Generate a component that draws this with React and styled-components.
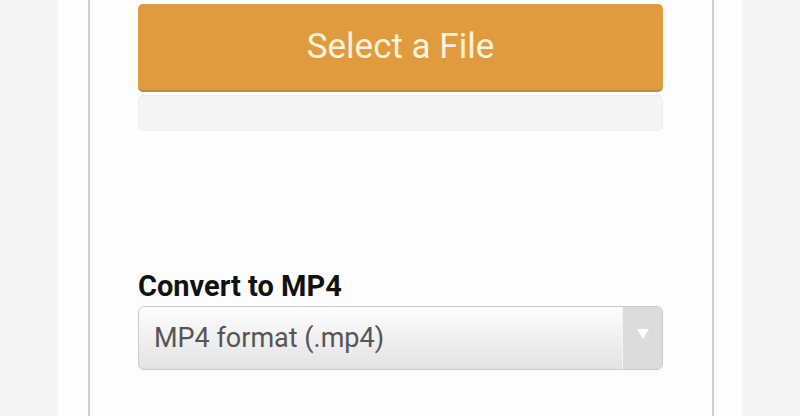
import React from 'react'
import styled, { createGlobalStyle } from 'styled-components'

const GlobalStyle = createGlobalStyle`
  html, body {
    margin: 0;
    padding: 0;
    background: #f5f5f5;
    font-family: Roboto, "Liberation Sans", sans-serif;
  }
`

const Page = styled.div`
  display: flex;
  justify-content: center;
  min-height: 100vh;
`

const Frame = styled.div`
  width: 684px;
  padding: 0 28px 0 30px;
  box-sizing: border-box;
  background: #fdfdfd;
  display: flex;
`

const Panel = styled.div`
  flex: 1;
  border-left: 2px solid #cfcfcf;
  border-right: 2px solid #cfcfcf;
  padding: 4px 49px 0 48px;
  display: flex;
  flex-direction: column;
`

const UploadButton = styled.button`
  height: 88px;
  border: none;
  border-bottom: 2px solid #c4873c;
  border-radius: 5px;
  background: #e09b3e;
  color: #fdf2dc;
  font-family: Roboto, "Liberation Sans", sans-serif;
  font-size: 35px;
  display: flex;
  align-items: center;
  justify-content: center;
  padding: 0 0 2px;
  cursor: pointer;
`

const Progress = styled.div`
  margin-top: 3px;
  height: 36px;
  box-sizing: border-box;
  border: 1px solid #ededed;
  border-radius: 6px;
  background: #f5f5f5;
`

const Label = styled.div`
  margin-top: 140px;
  font-size: 29px;
  line-height: 30px;
  font-weight: 700;
  color: #111;
`

const Select = styled.div`
  margin-top: 5px;
  height: 64px;
  box-sizing: border-box;
  border: 1px solid #cacaca;
  border-radius: 6px;
  background: linear-gradient(#fdfdfd, #e3e3e3);
  display: flex;
  overflow: hidden;
`

const SelectText = styled.div`
  flex: 1;
  display: flex;
  align-items: center;
  padding-left: 15px;
  font-size: 27px;
  line-height: 30px;
  color: #555;
`

const Arrow = styled.div`
  width: 40px;
  border-left: 1px solid #f4f4f4;
  background: #dcdcdc;
  display: flex;
  align-items: center;
  justify-content: center;
  padding-bottom: 8px;
  box-sizing: border-box;
`

export default function App() {
  return (
    <>
      <GlobalStyle />
      <Page>
        <Frame>
          <Panel>
            <UploadButton>Select a File</UploadButton>
            <Progress />
            <Label>Convert to MP4</Label>
            <Select>
              <SelectText>MP4 format (.mp4)</SelectText>
              <Arrow>
                <svg width="12" height="10" viewBox="0 0 12 10">
                  <path d="M0 0 H12 L6 10 Z" fill="#ffffff" />
                </svg>
              </Arrow>
            </Select>
          </Panel>
        </Frame>
      </Page>
    </>
  )
}
